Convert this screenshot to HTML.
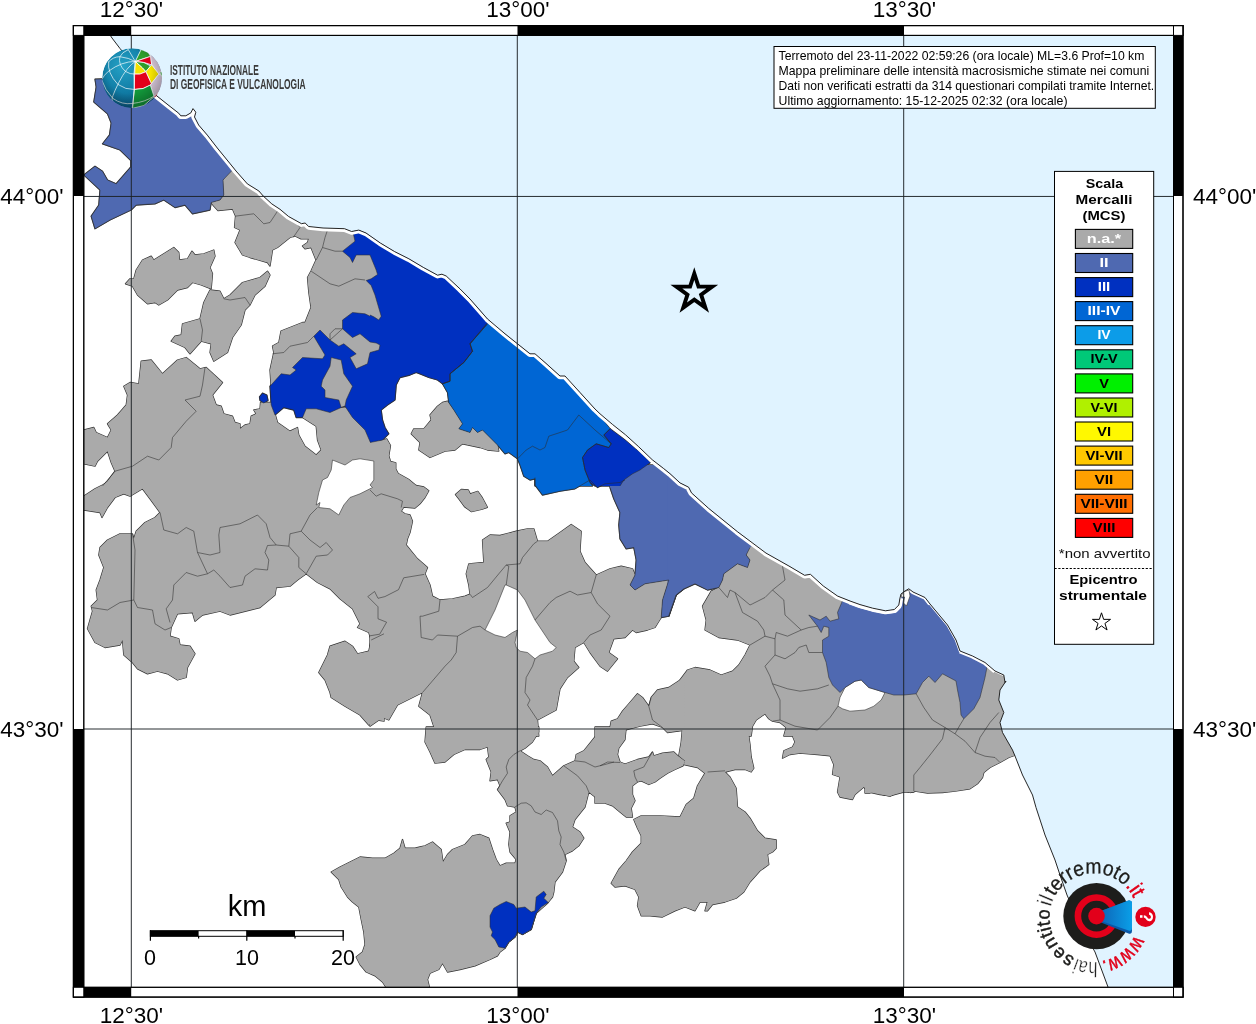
<!DOCTYPE html>
<html><head><meta charset="utf-8"><title>Mappa intensita</title>
<style>
html,body{margin:0;padding:0;background:#fff;}
body{width:1256px;height:1024px;overflow:hidden;font-family:"Liberation Sans",sans-serif;}
svg{display:block;position:absolute;left:0;top:0;will-change:transform;}
text{font-family:"Liberation Sans",sans-serif;}
.g{fill:#aaaaaa;stroke:none}
.c2{fill:#4f69b1;stroke:none}
.c3{fill:#0030c0;stroke:none}
.c34{fill:#0066d4;stroke:none}
.ol{fill:none;stroke:#333;stroke-width:1.3;stroke-linejoin:round}
.b{fill:none;stroke:#2c2c2c;stroke-width:0.55;stroke-linejoin:round}
.ax{font-size:22.5px;fill:#000}
</style></head><body>
<svg width="1256" height="1024" viewBox="0 0 1256 1024">
<defs><clipPath id="mapclip"><rect x="83.8" y="35.4" width="1089.7" height="951.9"/></clipPath></defs>
<rect x="83.8" y="35.4" width="1089.7" height="951.9" fill="#e0f3ff"/>
<g clip-path="url(#mapclip)">
<clipPath id="landclip"><polygon points="84.0,35.0 110.0,35.0 112.0,38.0 120.0,48.5 132.0,63.0 145.0,80.0 155.7,95.0 170.1,106.5 178.7,113.2 180.8,115.8 185.8,115.8 190.8,112.9 193.0,108.6 195.8,112.2 194.5,117.0 198.7,125.1 207.3,135.1 217.3,148.0 230.2,163.8 236.0,171.0 247.4,183.9 258.9,191.0 263.2,196.0 271.8,203.9 280.0,209.3 288.6,216.5 301.5,223.7 305.1,223.0 308.7,226.5 323.0,228.0 344.5,228.7 351.6,231.5 358.8,230.1 366.0,233.0 380.3,243.0 394.6,251.6 408.9,258.8 423.3,267.4 437.6,275.2 441.9,274.2 446.2,276.0 460.0,288.9 470.0,299.0 487.5,319.0 505.0,333.8 517.5,343.8 530.0,353.8 535.0,353.8 545.0,362.5 560.0,376.0 565.0,376.0 580.0,392.5 595.0,409.0 600.0,413.8 612.7,424.6 625.5,434.8 638.2,446.3 652.2,459.7 663.7,468.6 670.0,473.7 680.0,482.9 688.6,487.2 691.5,492.9 708.7,508.4 737.3,531.6 766.0,553.1 788.9,566.0 804.6,575.3 810.4,574.3 823.3,586.0 837.6,596.1 850.0,601.0 860.0,604.6 872.7,608.2 885.5,610.8 894.4,609.5 898.8,605.0 900.0,598.0 901.0,594.0 905.0,591.0 908.8,588.8 913.0,592.0 925.0,597.5 930.0,604.0 935.0,610.0 947.5,625.0 956.0,640.0 960.0,651.0 972.5,656.0 985.0,662.5 995.0,671.0 1003.8,675.0 1005.0,682.5 1006.0,681.0 1000.0,690.0 998.8,700.0 1003.8,712.5 1000.0,722.5 1002.5,732.5 1012.5,750.0 1015.0,756.0 1022.5,775.0 1032.5,795.0 1036.0,807.5 1045.0,835.0 1055.0,860.0 1060.0,875.0 1067.0,895.0 1080.0,925.0 1095.0,952.0 1108.0,987.0 84.0,987.5"/></clipPath>
<polygon points="84.0,35.0 110.0,35.0 112.0,38.0 120.0,48.5 132.0,63.0 145.0,80.0 155.7,95.0 170.1,106.5 178.7,113.2 180.8,115.8 185.8,115.8 190.8,112.9 193.0,108.6 195.8,112.2 194.5,117.0 198.7,125.1 207.3,135.1 217.3,148.0 230.2,163.8 236.0,171.0 247.4,183.9 258.9,191.0 263.2,196.0 271.8,203.9 280.0,209.3 288.6,216.5 301.5,223.7 305.1,223.0 308.7,226.5 323.0,228.0 344.5,228.7 351.6,231.5 358.8,230.1 366.0,233.0 380.3,243.0 394.6,251.6 408.9,258.8 423.3,267.4 437.6,275.2 441.9,274.2 446.2,276.0 460.0,288.9 470.0,299.0 487.5,319.0 505.0,333.8 517.5,343.8 530.0,353.8 535.0,353.8 545.0,362.5 560.0,376.0 565.0,376.0 580.0,392.5 595.0,409.0 600.0,413.8 612.7,424.6 625.5,434.8 638.2,446.3 652.2,459.7 663.7,468.6 670.0,473.7 680.0,482.9 688.6,487.2 691.5,492.9 708.7,508.4 737.3,531.6 766.0,553.1 788.9,566.0 804.6,575.3 810.4,574.3 823.3,586.0 837.6,596.1 850.0,601.0 860.0,604.6 872.7,608.2 885.5,610.8 894.4,609.5 898.8,605.0 900.0,598.0 901.0,594.0 905.0,591.0 908.8,588.8 913.0,592.0 925.0,597.5 930.0,604.0 935.0,610.0 947.5,625.0 956.0,640.0 960.0,651.0 972.5,656.0 985.0,662.5 995.0,671.0 1003.8,675.0 1005.0,682.5 1006.0,681.0 1000.0,690.0 998.8,700.0 1003.8,712.5 1000.0,722.5 1002.5,732.5 1012.5,750.0 1015.0,756.0 1022.5,775.0 1032.5,795.0 1036.0,807.5 1045.0,835.0 1055.0,860.0 1060.0,875.0 1067.0,895.0 1080.0,925.0 1095.0,952.0 1108.0,987.0 84.0,987.5" fill="#fff" stroke="none"/>
<g clip-path="url(#landclip)">
<polygon class="ol" points="232.5,167.0 250.0,178.0 266.0,192.0 280.0,204.0 293.0,212.0 305.0,219.0 322.5,222.0 345.0,225.0 352.0,228.0 384.0,238.0 384.0,385.0 271.0,385.0 270.0,370.0 273.8,352.5 272.5,346.0 278.8,342.5 281.0,331.0 302.5,322.5 305.0,322.5 311.0,307.5 308.8,292.5 307.5,277.5 311.0,271.0 316.0,260.0 311.0,247.5 305.0,248.8 302.5,246.0 307.5,242.5 308.8,238.8 301.0,238.8 295.0,236.0 290.0,237.5 277.5,247.5 272.5,250.0 270.0,266.0 267.5,262.5 250.0,257.5 242.5,255.0 235.0,242.5 240.0,230.0 234.5,227.5 235.5,216.0 232.5,209.0 218.0,210.5 213.8,206.0 211.0,202.5 220.0,200.0 223.8,195.0 223.0,180.0"/>
<polygon class="ol" points="125.5,283.8 130.0,278.8 133.8,278.8 136.2,270.0 142.5,260.0 151.2,256.2 153.8,260.0 163.8,253.8 173.8,247.5 178.8,252.5 179.5,260.0 187.5,258.8 192.0,251.2 195.0,255.0 203.8,253.8 213.8,250.0 215.0,256.2 210.0,267.5 212.5,273.8 211.2,288.8 201.2,285.0 192.5,282.5 187.5,287.5 177.5,290.0 167.5,300.0 158.8,305.0 155.0,302.5 147.5,303.8 137.5,295.0 132.5,286.2"/>
<polygon class="ol" points="210.0,290.0 220.0,291.2 223.8,298.8 230.0,295.0 242.5,282.5 260.0,277.5 267.5,271.2 270.0,275.0 265.0,286.2 255.0,295.0 250.0,305.0 245.0,310.0 241.2,325.0 232.5,337.5 227.5,352.5 213.8,361.2 210.0,352.5 211.2,343.8 201.2,341.2 190.0,353.8 185.0,347.5 171.2,341.2 175.0,336.2 181.2,335.0 182.5,323.8 200.0,318.8 203.8,302.5"/>
<polygon class="ol" points="83.8,430.0 93.8,427.5 96.2,432.5 107.5,437.5 111.2,430.0 107.5,423.8 117.5,415.0 126.2,405.0 127.5,395.0 123.8,386.2 130.0,382.5 138.8,383.8 141.2,361.2 151.2,360.0 162.5,373.8 177.5,360.0 186.2,357.5 200.0,368.8 206.2,367.5 222.5,382.5 212.5,395.0 216.2,405.0 221.2,406.2 223.8,413.8 232.5,416.2 235.0,422.5 240.0,423.8 240.0,428.8 245.0,425.0 250.0,423.8 251.2,416.2 256.2,413.8 253.8,410.0 260.0,408.8 260.5,402.5 272.5,402.5 275.0,413.8 277.5,422.5 290.0,431.2 297.5,427.5 298.8,435.0 305.0,446.2 316.2,455.0 321.2,450.0 317.5,440.0 316.2,426.2 302.5,417.5 305.0,407.5 379.5,407.5 379.5,442.5 384.0,442.5 384.0,486.0 102.5,486.0 107.5,481.2 115.0,471.2 111.2,462.5 107.5,451.2 97.5,461.2 95.0,466.2 83.8,463.8"/>
<polygon class="ol" points="442.5,402.5 447.5,401.2 453.8,410.0 462.5,423.8 458.8,428.8 470.0,432.5 472.5,427.5 477.5,432.5 482.5,430.0 490.0,437.5 497.5,445.0 498.8,451.2 487.5,450.0 480.0,447.5 462.5,443.8 455.0,450.0 445.0,451.2 430.0,457.5 418.8,450.0 420.0,442.5 411.2,433.8 413.8,428.8 423.8,428.8 431.2,420.0 430.0,415.0 437.5,406.2"/>
<polygon class="ol" points="111.2,480.0 384.0,480.0 384.0,721.2 377.5,720.0 368.8,725.0 360.0,715.0 345.0,706.2 331.2,697.5 330.0,692.5 325.0,680.0 318.8,672.5 327.5,655.0 330.0,646.2 345.0,641.2 352.5,646.2 357.5,653.8 368.8,651.2 371.2,640.0 368.8,632.5 357.5,627.5 360.0,623.8 352.5,608.8 340.0,598.8 330.0,588.8 317.5,582.5 306.2,573.8 297.5,580.0 290.0,586.2 276.2,587.5 275.0,595.0 267.5,601.2 260.0,607.5 250.0,610.0 230.0,615.0 220.0,611.2 202.5,615.0 195.0,621.2 192.5,612.5 177.5,613.8 171.2,627.5 170.0,636.2 178.8,638.8 180.0,645.0 190.0,646.2 195.0,653.8 187.5,667.5 186.2,677.5 177.5,680.0 167.5,673.8 157.5,671.2 147.5,673.8 137.5,668.8 132.5,662.5 123.8,655.0 122.5,640.0 120.0,645.0 105.0,647.5 95.0,642.5 87.5,628.8 92.5,611.2 91.2,606.2 97.5,600.0 96.2,590.0 100.0,580.0 103.8,567.5 98.8,555.0 100.0,547.5 107.5,540.0 120.0,533.8 132.5,533.8 133.8,538.8 136.2,531.2 145.0,522.5 155.0,517.5 160.0,512.5 150.0,498.8 142.5,488.8 130.0,496.2 123.8,493.8 115.0,497.5 107.5,507.5 102.0,517.5 100.0,512.5 83.8,510.0 83.8,496.2 95.0,488.8 102.5,485.0"/>
<polygon class="ol" points="370.0,442.5 382.5,440.0 386.8,439.0 390.5,445.5 388.8,455.8 390.5,461.5 395.8,462.8 395.8,469.0 398.2,473.5 408.5,479.2 416.0,485.5 423.8,487.0 428.8,490.8 425.0,497.5 420.0,503.8 415.0,508.0 403.8,507.0 401.2,511.2 405.0,513.8 410.0,515.0 412.5,521.2 410.0,532.5 407.5,538.8 406.2,545.0 411.2,551.2 417.5,558.8 427.5,567.5 425.0,573.8 430.0,585.0 432.5,596.2 440.0,600.0 452.5,598.8 465.0,596.2 470.0,594.2 468.8,585.0 466.2,573.8 468.8,563.8 483.8,562.5 482.5,540.0 490.0,535.0 500.0,535.5 516.2,531.2 527.5,528.8 533.8,528.8 537.5,541.2 547.5,541.2 560.0,532.5 571.2,524.5 581.2,531.2 580.0,551.2 585.0,562.5 596.2,575.0 610.0,568.8 621.2,566.2 632.5,568.8 635.0,575.0 630.0,585.0 635.0,590.0 645.0,583.8 668.8,580.0 662.5,600.0 661.2,617.5 655.0,627.5 647.5,630.0 636.2,632.5 632.5,630.0 625.0,637.5 613.8,638.8 608.8,652.5 617.5,658.8 607.5,671.2 600.0,666.2 590.0,652.5 583.8,642.5 575.0,647.5 573.8,661.2 578.8,667.5 567.5,677.5 560.0,688.8 556.2,710.0 537.5,720.0 538.8,736.0 426.2,736.0 435.0,730.0 430.0,715.0 418.8,706.2 422.5,692.5 407.5,700.0 397.5,705.0 388.8,720.0 382.5,717.5 370.0,726.2"/>
<polygon class="ol" points="455.5,494.5 461.3,489.4 468.3,490.0 470.2,493.9 477.8,491.3 482.3,497.7 487.4,507.3 482.3,509.2 471.5,511.7 464.5,506.6 459.4,499.6"/>
<polygon class="ol" points="750.0,544.5 782.5,563.2 805.0,573.2 830.0,588.2 842.5,599.5 984.0,599.5 984.0,736.0 783.8,736.0 786.2,727.5 780.0,722.5 772.5,721.2 768.8,718.8 765.0,713.8 756.2,720.0 752.5,726.2 751.2,736.0 682.5,736.0 687.5,732.5 685.0,730.0 670.0,731.2 670.0,688.8 676.2,687.5 680.0,680.0 687.5,670.0 695.0,667.5 710.0,670.0 721.2,675.0 732.5,671.2 738.8,665.0 745.0,655.0 750.0,645.0 737.5,640.0 718.8,637.5 705.0,630.0 706.2,620.0 702.5,606.2 711.2,591.2 718.8,587.5 722.5,580.0 723.8,573.8 737.5,563.8 747.5,567.5 750.0,560.0 746.2,555.0"/>
<polygon class="ol" points="426.2,727.0 425.0,742.0 430.0,752.0 435.0,763.2 445.0,762.0 453.8,754.5 465.0,749.5 480.0,749.5 487.5,747.0 488.8,757.0 486.2,759.5 491.2,772.0 490.0,780.8 497.5,779.5 500.0,785.8 497.5,789.5 505.0,799.5 507.5,805.8 515.0,807.0 516.2,812.0 510.0,815.8 510.0,822.0 506.2,823.2 510.0,832.0 508.8,844.5 510.0,852.0 516.2,859.5 515.0,863.2 506.2,863.2 500.0,865.8 496.2,859.5 492.5,849.5 488.8,838.2 480.0,834.5 472.5,835.8 465.0,844.5 452.5,849.5 447.5,854.5 443.0,862.0 441.2,849.5 432.5,842.0 425.0,845.8 420.0,847.0 415.0,848.2 405.0,848.2 402.5,839.5 400.0,848.2 393.8,853.2 385.0,858.2 372.5,858.2 360.0,857.0 350.0,862.0 340.0,867.0 331.2,872.0 338.8,879.5 341.2,887.0 347.5,897.0 352.5,902.0 358.8,907.0 361.2,919.5 363.8,932.0 365.0,944.5 362.5,952.0 356.2,957.0 360.0,964.5 366.2,972.0 375.0,975.8 382.5,982.0 387.5,989.5 430.0,989.5 427.5,979.5 430.0,973.2 438.8,969.5 442.5,963.2 447.5,972.0 460.0,969.5 475.0,965.8 490.0,959.5 497.5,955.8 500.0,952.0 505.0,948.2 508.8,942.0 515.0,937.0 517.5,932.0 522.5,934.5 531.2,929.5 533.8,920.8 536.2,913.2 547.5,903.2 552.5,897.0 553.8,892.0 555.0,882.0 562.5,872.0 566.2,860.8 565.0,854.5 572.5,850.8 578.8,845.8 583.8,838.2 580.0,832.0 572.5,827.0 575.0,819.5 585.0,807.0 588.8,792.0 600.0,800.8 614.0,804.5 614.0,727.0 603.8,732.0 595.0,737.0 590.0,743.2 583.8,750.8 576.2,754.5 575.0,760.8 563.8,765.8 552.5,775.8 547.5,767.0 540.0,760.8 533.8,759.5 527.5,755.8 520.0,750.8 525.0,748.2 532.5,742.0 538.8,732.0 538.8,727.0"/>
<polygon class="ol" points="682.5,727.0 681.2,742.0 678.8,755.8 685.0,760.8 683.8,764.5 697.5,767.5 705.0,773.2 697.5,785.8 693.8,798.2 686.2,804.5 680.0,817.0 660.0,815.8 641.2,815.8 633.8,819.5 637.5,828.2 641.2,835.8 641.2,843.2 632.5,852.0 626.2,860.8 618.8,869.5 611.2,883.2 615.0,887.0 625.0,885.8 635.0,889.5 638.8,897.0 637.5,905.8 641.2,915.8 650.0,915.8 662.5,917.0 675.0,910.8 685.0,907.0 695.0,910.8 700.0,902.0 707.5,902.0 705.0,910.8 707.5,910.8 712.5,904.5 725.0,902.0 736.2,898.2 743.8,892.0 750.0,882.0 760.0,870.8 768.8,864.5 767.5,854.5 772.5,852.0 776.2,848.2 776.2,840.0 765.0,838.2 757.5,830.8 750.0,818.2 745.0,812.0 737.5,807.0 736.2,788.2 730.0,777.0 725.0,772.0 735.0,769.5 745.0,769.5 751.2,772.0 753.8,768.2 751.2,757.0 750.0,744.5 747.5,727.0"/>
<polygon class="ol" points="626.2,727.0 625.0,739.5 618.8,748.2 617.5,754.5 620.0,762.0 625.0,764.0 637.5,759.5 648.8,757.0 652.5,752.0 653.8,755.8 662.5,753.2 673.8,752.0 678.0,756.0 685.0,761.2 683.0,765.8 675.0,769.5 667.5,773.2 660.0,778.2 655.0,782.0 648.8,784.5 641.2,780.8 637.5,782.0 632.5,785.8 632.5,794.5 635.0,800.8 631.2,808.2 632.5,817.0 626.2,817.0 620.0,812.0 612.5,805.8 605.0,803.2 595.0,803.2 595.0,727.0"/>
<polygon class="ol" points="788.8,727.0 795.0,742.0 792.5,747.0 783.8,750.8 782.5,758.2 790.0,754.5 800.0,753.2 817.5,754.5 830.0,755.8 833.8,764.5 832.5,774.5 840.0,777.0 837.5,792.0 840.0,797.0 852.5,799.5 855.0,794.5 863.8,787.0 868.8,792.0 880.0,794.5 890.0,795.8 903.8,792.0 914.0,792.0 914.0,727.0"/>
<polygon class="ol" points="870.0,793.0 875.0,791.2 882.5,794.5 890.0,796.2 902.5,790.0 910.0,792.5 915.0,791.2 927.5,793.0 942.5,792.5 955.0,791.2 970.0,788.8 977.5,783.8 982.5,777.5 983.8,772.5 990.0,767.5 1000.0,762.5 1008.8,757.5 1014.5,755.5 1025.0,750.0 1025.0,635.0 865.0,635.0 865.0,793.0"/>
<polygon class="ol" points="610.0,727.5 611.2,721.2 617.5,718.8 622.5,711.2 628.8,703.8 637.5,693.8 642.5,697.5 648.8,706.2 651.2,697.5 657.5,690.0 668.8,687.5 684.0,677.5 685.0,730.0 667.5,732.5 662.5,727.5 652.5,723.8 640.0,726.2 625.0,730.0 620.0,736.0 610.0,736.0"/>
<polygon class="ol" points="95.0,79.2 145.0,77.5 158.8,93.8 180.0,110.0 197.5,115.0 213.8,136.2 233.8,163.8 232.5,170.0 223.0,180.0 223.8,195.0 220.0,200.0 211.2,202.5 210.0,210.0 192.5,213.8 185.0,205.0 175.0,207.5 163.8,200.0 155.0,203.8 136.2,205.0 131.2,210.0 110.0,220.0 95.0,228.8 91.2,216.2 98.8,205.0 100.0,190.0 83.8,175.0 95.0,166.2 102.5,171.2 107.5,180.0 116.2,183.8 130.8,167.0 130.8,160.5 120.0,150.0 102.5,143.8 109.5,135.0 111.2,123.0 107.5,113.8 93.8,102.0 96.2,87.0"/>
<polygon class="ol" points="610.0,487.5 610.0,465.0 684.0,465.0 684.0,588.8 676.2,595.0 668.8,616.2 661.2,617.5 662.5,600.0 668.8,580.0 645.0,583.8 635.0,590.0 630.0,585.0 635.0,575.0 636.2,560.0 633.8,547.5 626.2,548.8 620.0,538.8 618.8,525.0 620.0,512.5 613.8,498.8"/>
<polygon class="ol" points="667.5,465.0 720.0,505.0 752.5,545.5 750.0,547.5 746.2,555.0 750.0,560.0 747.5,567.5 737.5,563.8 723.8,573.8 722.5,580.0 718.8,587.5 707.5,590.0 695.0,583.8 684.0,588.8 676.2,595.0 668.8,616.2 667.5,616.2"/>
<polygon class="ol" points="843.2,599.0 837.5,612.5 838.8,618.8 830.0,621.2 826.2,616.2 820.0,620.0 808.8,615.0 817.5,626.2 821.2,632.5 823.8,626.2 828.8,627.5 828.8,636.2 822.5,640.0 822.5,652.5 826.2,662.5 828.8,677.5 832.5,685.0 840.0,692.5 845.0,687.5 855.0,681.2 861.2,680.0 868.8,687.5 885.0,692.5 893.8,695.0 903.8,695.0 916.2,693.8 922.5,682.5 928.8,676.2 935.0,682.5 942.5,673.8 956.0,681.0 957.5,690.0 960.0,702.5 961.0,715.0 963.8,718.8 973.8,708.8 980.0,697.5 985.0,677.5 987.5,664.5 1020.0,663.8 1020.0,580.0 845.0,580.0"/>
<polygon class="ol" points="487.5,322.5 505.0,333.8 517.5,343.8 530.0,353.8 545.0,362.5 560.0,376.2 580.0,392.5 595.0,410.0 610.0,428.8 603.8,435.0 611.2,443.8 608.8,447.5 596.2,443.8 587.5,450.0 582.5,457.5 585.0,470.0 590.0,482.5 592.5,486.0 535.0,486.0 535.0,478.8 530.0,480.0 523.8,476.2 520.0,465.0 517.5,458.8 508.8,452.5 505.0,453.8 497.5,445.0 490.0,437.5 482.5,430.0 477.5,432.5 472.5,427.5 470.0,432.5 458.8,428.8 462.5,423.8 453.8,410.0 448.8,402.5 447.5,392.5 442.5,383.8 450.0,381.2 450.0,373.8 463.8,362.5 472.5,351.2 470.0,343.8"/>
<polygon class="ol" points="535.0,477.5 535.0,485.0 542.5,495.0 560.0,491.2 575.0,488.8 590.0,480.0 592.5,477.5"/>
<polygon class="ol" points="352.5,230.0 370.2,230.0 370.2,255.0 356.2,255.0 352.5,262.5 350.0,257.5 342.5,251.2 355.0,241.2"/>
<polygon class="ol" points="370.2,315.0 370.2,442.0 365.0,430.0 352.5,417.5 345.0,406.2 341.2,407.5 330.0,412.5 316.2,408.8 306.2,408.8 302.5,417.5 296.2,417.5 293.8,410.0 283.8,407.5 275.0,415.0 271.2,405.0 270.0,386.2 281.2,373.8 290.0,375.0 296.2,370.0 292.5,367.5 302.5,357.5 322.5,358.8 325.0,355.0 313.8,336.2 320.0,330.0 330.0,340.0 342.5,328.8 342.5,320.0 352.5,312.5 365.0,313.8 370.0,316.2"/>
<polygon class="ol" points="259.5,397.0 262.5,393.2 266.8,395.0 268.0,400.5 263.8,403.0 260.0,400.5"/>
<polygon class="ol" points="370.0,233.8 355.0,220.0 420.0,255.0 490.0,318.8 487.5,323.8 470.0,343.8 472.5,351.2 463.8,362.5 450.0,373.8 450.0,381.2 442.5,383.8 437.5,380.0 428.8,377.5 420.0,373.8 416.2,372.5 410.0,375.0 400.0,377.5 396.2,385.0 395.0,400.0 387.5,405.0 381.2,410.0 382.5,420.0 385.0,427.5 388.8,433.8 382.5,440.0 370.0,442.5 370.0,343.8 370.0,315.0 373.8,316.8 378.8,320.0 381.2,316.2 375.0,295.0 371.2,285.5 366.2,280.5 371.2,278.8 377.5,274.5 376.2,270.0 370.0,255.0"/>
<polygon class="ol" points="611.2,443.8 608.8,447.5 596.2,443.8 587.5,450.0 582.5,457.5 585.0,470.0 590.0,482.5 595.0,486.0 620.0,486.0 623.8,480.0 632.5,473.8 640.0,470.0 650.5,462.5 640.0,452.5 625.0,440.0 610.0,428.8 603.8,435.0"/>
<polygon class="ol" points="590.0,477.5 590.0,480.0 597.5,487.5 605.0,483.8 620.0,482.5 625.0,480.0 620.0,477.5"/>
<polygon class="ol" points="490.0,915.8 493.8,908.2 500.0,904.5 506.2,901.5 513.8,904.5 516.2,908.2 525.0,907.0 531.2,912.0 535.0,910.8 536.2,897.0 543.8,891.2 546.2,894.5 543.8,898.2 548.2,902.5 541.2,907.0 536.2,913.2 533.8,920.8 531.2,929.5 522.5,934.5 517.5,932.0 515.0,937.0 508.8,942.0 505.0,948.2 498.8,947.0 495.0,939.5 491.2,935.8 492.5,932.0 490.0,927.0"/>
<polygon class="g" points="232.5,167.0 250.0,178.0 266.0,192.0 280.0,204.0 293.0,212.0 305.0,219.0 322.5,222.0 345.0,225.0 352.0,228.0 384.0,238.0 384.0,385.0 271.0,385.0 270.0,370.0 273.8,352.5 272.5,346.0 278.8,342.5 281.0,331.0 302.5,322.5 305.0,322.5 311.0,307.5 308.8,292.5 307.5,277.5 311.0,271.0 316.0,260.0 311.0,247.5 305.0,248.8 302.5,246.0 307.5,242.5 308.8,238.8 301.0,238.8 295.0,236.0 290.0,237.5 277.5,247.5 272.5,250.0 270.0,266.0 267.5,262.5 250.0,257.5 242.5,255.0 235.0,242.5 240.0,230.0 234.5,227.5 235.5,216.0 232.5,209.0 218.0,210.5 213.8,206.0 211.0,202.5 220.0,200.0 223.8,195.0 223.0,180.0"/>
<polygon class="g" points="125.5,283.8 130.0,278.8 133.8,278.8 136.2,270.0 142.5,260.0 151.2,256.2 153.8,260.0 163.8,253.8 173.8,247.5 178.8,252.5 179.5,260.0 187.5,258.8 192.0,251.2 195.0,255.0 203.8,253.8 213.8,250.0 215.0,256.2 210.0,267.5 212.5,273.8 211.2,288.8 201.2,285.0 192.5,282.5 187.5,287.5 177.5,290.0 167.5,300.0 158.8,305.0 155.0,302.5 147.5,303.8 137.5,295.0 132.5,286.2"/>
<polygon class="g" points="210.0,290.0 220.0,291.2 223.8,298.8 230.0,295.0 242.5,282.5 260.0,277.5 267.5,271.2 270.0,275.0 265.0,286.2 255.0,295.0 250.0,305.0 245.0,310.0 241.2,325.0 232.5,337.5 227.5,352.5 213.8,361.2 210.0,352.5 211.2,343.8 201.2,341.2 190.0,353.8 185.0,347.5 171.2,341.2 175.0,336.2 181.2,335.0 182.5,323.8 200.0,318.8 203.8,302.5"/>
<polygon class="g" points="83.8,430.0 93.8,427.5 96.2,432.5 107.5,437.5 111.2,430.0 107.5,423.8 117.5,415.0 126.2,405.0 127.5,395.0 123.8,386.2 130.0,382.5 138.8,383.8 141.2,361.2 151.2,360.0 162.5,373.8 177.5,360.0 186.2,357.5 200.0,368.8 206.2,367.5 222.5,382.5 212.5,395.0 216.2,405.0 221.2,406.2 223.8,413.8 232.5,416.2 235.0,422.5 240.0,423.8 240.0,428.8 245.0,425.0 250.0,423.8 251.2,416.2 256.2,413.8 253.8,410.0 260.0,408.8 260.5,402.5 272.5,402.5 275.0,413.8 277.5,422.5 290.0,431.2 297.5,427.5 298.8,435.0 305.0,446.2 316.2,455.0 321.2,450.0 317.5,440.0 316.2,426.2 302.5,417.5 305.0,407.5 379.5,407.5 379.5,442.5 384.0,442.5 384.0,486.0 102.5,486.0 107.5,481.2 115.0,471.2 111.2,462.5 107.5,451.2 97.5,461.2 95.0,466.2 83.8,463.8"/>
<polygon class="g" points="442.5,402.5 447.5,401.2 453.8,410.0 462.5,423.8 458.8,428.8 470.0,432.5 472.5,427.5 477.5,432.5 482.5,430.0 490.0,437.5 497.5,445.0 498.8,451.2 487.5,450.0 480.0,447.5 462.5,443.8 455.0,450.0 445.0,451.2 430.0,457.5 418.8,450.0 420.0,442.5 411.2,433.8 413.8,428.8 423.8,428.8 431.2,420.0 430.0,415.0 437.5,406.2"/>
<polygon class="g" points="111.2,480.0 384.0,480.0 384.0,721.2 377.5,720.0 368.8,725.0 360.0,715.0 345.0,706.2 331.2,697.5 330.0,692.5 325.0,680.0 318.8,672.5 327.5,655.0 330.0,646.2 345.0,641.2 352.5,646.2 357.5,653.8 368.8,651.2 371.2,640.0 368.8,632.5 357.5,627.5 360.0,623.8 352.5,608.8 340.0,598.8 330.0,588.8 317.5,582.5 306.2,573.8 297.5,580.0 290.0,586.2 276.2,587.5 275.0,595.0 267.5,601.2 260.0,607.5 250.0,610.0 230.0,615.0 220.0,611.2 202.5,615.0 195.0,621.2 192.5,612.5 177.5,613.8 171.2,627.5 170.0,636.2 178.8,638.8 180.0,645.0 190.0,646.2 195.0,653.8 187.5,667.5 186.2,677.5 177.5,680.0 167.5,673.8 157.5,671.2 147.5,673.8 137.5,668.8 132.5,662.5 123.8,655.0 122.5,640.0 120.0,645.0 105.0,647.5 95.0,642.5 87.5,628.8 92.5,611.2 91.2,606.2 97.5,600.0 96.2,590.0 100.0,580.0 103.8,567.5 98.8,555.0 100.0,547.5 107.5,540.0 120.0,533.8 132.5,533.8 133.8,538.8 136.2,531.2 145.0,522.5 155.0,517.5 160.0,512.5 150.0,498.8 142.5,488.8 130.0,496.2 123.8,493.8 115.0,497.5 107.5,507.5 102.0,517.5 100.0,512.5 83.8,510.0 83.8,496.2 95.0,488.8 102.5,485.0"/>
<polygon class="g" points="370.0,442.5 382.5,440.0 386.8,439.0 390.5,445.5 388.8,455.8 390.5,461.5 395.8,462.8 395.8,469.0 398.2,473.5 408.5,479.2 416.0,485.5 423.8,487.0 428.8,490.8 425.0,497.5 420.0,503.8 415.0,508.0 403.8,507.0 401.2,511.2 405.0,513.8 410.0,515.0 412.5,521.2 410.0,532.5 407.5,538.8 406.2,545.0 411.2,551.2 417.5,558.8 427.5,567.5 425.0,573.8 430.0,585.0 432.5,596.2 440.0,600.0 452.5,598.8 465.0,596.2 470.0,594.2 468.8,585.0 466.2,573.8 468.8,563.8 483.8,562.5 482.5,540.0 490.0,535.0 500.0,535.5 516.2,531.2 527.5,528.8 533.8,528.8 537.5,541.2 547.5,541.2 560.0,532.5 571.2,524.5 581.2,531.2 580.0,551.2 585.0,562.5 596.2,575.0 610.0,568.8 621.2,566.2 632.5,568.8 635.0,575.0 630.0,585.0 635.0,590.0 645.0,583.8 668.8,580.0 662.5,600.0 661.2,617.5 655.0,627.5 647.5,630.0 636.2,632.5 632.5,630.0 625.0,637.5 613.8,638.8 608.8,652.5 617.5,658.8 607.5,671.2 600.0,666.2 590.0,652.5 583.8,642.5 575.0,647.5 573.8,661.2 578.8,667.5 567.5,677.5 560.0,688.8 556.2,710.0 537.5,720.0 538.8,736.0 426.2,736.0 435.0,730.0 430.0,715.0 418.8,706.2 422.5,692.5 407.5,700.0 397.5,705.0 388.8,720.0 382.5,717.5 370.0,726.2"/>
<polygon class="g" points="455.5,494.5 461.3,489.4 468.3,490.0 470.2,493.9 477.8,491.3 482.3,497.7 487.4,507.3 482.3,509.2 471.5,511.7 464.5,506.6 459.4,499.6"/>
<polygon class="g" points="750.0,544.5 782.5,563.2 805.0,573.2 830.0,588.2 842.5,599.5 984.0,599.5 984.0,736.0 783.8,736.0 786.2,727.5 780.0,722.5 772.5,721.2 768.8,718.8 765.0,713.8 756.2,720.0 752.5,726.2 751.2,736.0 682.5,736.0 687.5,732.5 685.0,730.0 670.0,731.2 670.0,688.8 676.2,687.5 680.0,680.0 687.5,670.0 695.0,667.5 710.0,670.0 721.2,675.0 732.5,671.2 738.8,665.0 745.0,655.0 750.0,645.0 737.5,640.0 718.8,637.5 705.0,630.0 706.2,620.0 702.5,606.2 711.2,591.2 718.8,587.5 722.5,580.0 723.8,573.8 737.5,563.8 747.5,567.5 750.0,560.0 746.2,555.0"/>
<polygon class="g" points="426.2,727.0 425.0,742.0 430.0,752.0 435.0,763.2 445.0,762.0 453.8,754.5 465.0,749.5 480.0,749.5 487.5,747.0 488.8,757.0 486.2,759.5 491.2,772.0 490.0,780.8 497.5,779.5 500.0,785.8 497.5,789.5 505.0,799.5 507.5,805.8 515.0,807.0 516.2,812.0 510.0,815.8 510.0,822.0 506.2,823.2 510.0,832.0 508.8,844.5 510.0,852.0 516.2,859.5 515.0,863.2 506.2,863.2 500.0,865.8 496.2,859.5 492.5,849.5 488.8,838.2 480.0,834.5 472.5,835.8 465.0,844.5 452.5,849.5 447.5,854.5 443.0,862.0 441.2,849.5 432.5,842.0 425.0,845.8 420.0,847.0 415.0,848.2 405.0,848.2 402.5,839.5 400.0,848.2 393.8,853.2 385.0,858.2 372.5,858.2 360.0,857.0 350.0,862.0 340.0,867.0 331.2,872.0 338.8,879.5 341.2,887.0 347.5,897.0 352.5,902.0 358.8,907.0 361.2,919.5 363.8,932.0 365.0,944.5 362.5,952.0 356.2,957.0 360.0,964.5 366.2,972.0 375.0,975.8 382.5,982.0 387.5,989.5 430.0,989.5 427.5,979.5 430.0,973.2 438.8,969.5 442.5,963.2 447.5,972.0 460.0,969.5 475.0,965.8 490.0,959.5 497.5,955.8 500.0,952.0 505.0,948.2 508.8,942.0 515.0,937.0 517.5,932.0 522.5,934.5 531.2,929.5 533.8,920.8 536.2,913.2 547.5,903.2 552.5,897.0 553.8,892.0 555.0,882.0 562.5,872.0 566.2,860.8 565.0,854.5 572.5,850.8 578.8,845.8 583.8,838.2 580.0,832.0 572.5,827.0 575.0,819.5 585.0,807.0 588.8,792.0 600.0,800.8 614.0,804.5 614.0,727.0 603.8,732.0 595.0,737.0 590.0,743.2 583.8,750.8 576.2,754.5 575.0,760.8 563.8,765.8 552.5,775.8 547.5,767.0 540.0,760.8 533.8,759.5 527.5,755.8 520.0,750.8 525.0,748.2 532.5,742.0 538.8,732.0 538.8,727.0"/>
<polygon class="g" points="682.5,727.0 681.2,742.0 678.8,755.8 685.0,760.8 683.8,764.5 697.5,767.5 705.0,773.2 697.5,785.8 693.8,798.2 686.2,804.5 680.0,817.0 660.0,815.8 641.2,815.8 633.8,819.5 637.5,828.2 641.2,835.8 641.2,843.2 632.5,852.0 626.2,860.8 618.8,869.5 611.2,883.2 615.0,887.0 625.0,885.8 635.0,889.5 638.8,897.0 637.5,905.8 641.2,915.8 650.0,915.8 662.5,917.0 675.0,910.8 685.0,907.0 695.0,910.8 700.0,902.0 707.5,902.0 705.0,910.8 707.5,910.8 712.5,904.5 725.0,902.0 736.2,898.2 743.8,892.0 750.0,882.0 760.0,870.8 768.8,864.5 767.5,854.5 772.5,852.0 776.2,848.2 776.2,840.0 765.0,838.2 757.5,830.8 750.0,818.2 745.0,812.0 737.5,807.0 736.2,788.2 730.0,777.0 725.0,772.0 735.0,769.5 745.0,769.5 751.2,772.0 753.8,768.2 751.2,757.0 750.0,744.5 747.5,727.0"/>
<polygon class="g" points="626.2,727.0 625.0,739.5 618.8,748.2 617.5,754.5 620.0,762.0 625.0,764.0 637.5,759.5 648.8,757.0 652.5,752.0 653.8,755.8 662.5,753.2 673.8,752.0 678.0,756.0 685.0,761.2 683.0,765.8 675.0,769.5 667.5,773.2 660.0,778.2 655.0,782.0 648.8,784.5 641.2,780.8 637.5,782.0 632.5,785.8 632.5,794.5 635.0,800.8 631.2,808.2 632.5,817.0 626.2,817.0 620.0,812.0 612.5,805.8 605.0,803.2 595.0,803.2 595.0,727.0"/>
<polygon class="g" points="788.8,727.0 795.0,742.0 792.5,747.0 783.8,750.8 782.5,758.2 790.0,754.5 800.0,753.2 817.5,754.5 830.0,755.8 833.8,764.5 832.5,774.5 840.0,777.0 837.5,792.0 840.0,797.0 852.5,799.5 855.0,794.5 863.8,787.0 868.8,792.0 880.0,794.5 890.0,795.8 903.8,792.0 914.0,792.0 914.0,727.0"/>
<polygon class="g" points="870.0,793.0 875.0,791.2 882.5,794.5 890.0,796.2 902.5,790.0 910.0,792.5 915.0,791.2 927.5,793.0 942.5,792.5 955.0,791.2 970.0,788.8 977.5,783.8 982.5,777.5 983.8,772.5 990.0,767.5 1000.0,762.5 1008.8,757.5 1014.5,755.5 1025.0,750.0 1025.0,635.0 865.0,635.0 865.0,793.0"/>
<polygon class="g" points="610.0,727.5 611.2,721.2 617.5,718.8 622.5,711.2 628.8,703.8 637.5,693.8 642.5,697.5 648.8,706.2 651.2,697.5 657.5,690.0 668.8,687.5 684.0,677.5 685.0,730.0 667.5,732.5 662.5,727.5 652.5,723.8 640.0,726.2 625.0,730.0 620.0,736.0 610.0,736.0"/>
<polygon points="261.5,395.8 265.0,396.5 264.8,399.0 261.8,398.0" fill="#fff" stroke="#333" stroke-width="0.6"/>
<polygon points="322.5,480.0 318.8,492.5 316.2,505.0 320.0,502.5 318.8,507.5 330.0,508.8 338.8,515.0 343.8,505.0 350.0,497.5 360.0,493.8 372.5,487.5 370.0,485.0 373.8,480.0 373.8,461.0 360.0,458.8 352.5,460.0 345.0,465.0 332.5,460.0 331.2,470.0 327.5,477.5" fill="#fff" stroke="#333" stroke-width="0.6"/>
<polygon points="506.2,585.0 517.5,590.0 525.0,600.0 535.0,620.0 545.0,635.0 550.0,642.5 556.2,647.5 552.5,651.2 540.0,655.0 535.0,658.8 527.5,652.5 520.0,651.2 516.2,647.5 515.0,642.5 517.5,630.0 512.5,632.5 505.0,637.5 495.0,635.0 485.0,630.0 495.0,610.0 505.0,585.0" fill="#fff" stroke="#333" stroke-width="0.6"/>
<polygon points="840.0,697.5 845.0,687.5 855.0,681.2 861.2,680.0 868.8,687.5 885.0,692.5 881.2,700.0 873.8,706.2 865.0,710.0 850.0,711.2 842.5,708.8 838.0,706.2" fill="#fff" stroke="#333" stroke-width="0.6"/>
<polygon class="c2" points="95.0,79.2 145.0,77.5 158.8,93.8 180.0,110.0 197.5,115.0 213.8,136.2 233.8,163.8 232.5,170.0 223.0,180.0 223.8,195.0 220.0,200.0 211.2,202.5 210.0,210.0 192.5,213.8 185.0,205.0 175.0,207.5 163.8,200.0 155.0,203.8 136.2,205.0 131.2,210.0 110.0,220.0 95.0,228.8 91.2,216.2 98.8,205.0 100.0,190.0 83.8,175.0 95.0,166.2 102.5,171.2 107.5,180.0 116.2,183.8 130.8,167.0 130.8,160.5 120.0,150.0 102.5,143.8 109.5,135.0 111.2,123.0 107.5,113.8 93.8,102.0 96.2,87.0"/>
<polygon class="c2" points="610.0,487.5 610.0,465.0 684.0,465.0 684.0,588.8 676.2,595.0 668.8,616.2 661.2,617.5 662.5,600.0 668.8,580.0 645.0,583.8 635.0,590.0 630.0,585.0 635.0,575.0 636.2,560.0 633.8,547.5 626.2,548.8 620.0,538.8 618.8,525.0 620.0,512.5 613.8,498.8"/>
<polygon class="c2" points="667.5,465.0 720.0,505.0 752.5,545.5 750.0,547.5 746.2,555.0 750.0,560.0 747.5,567.5 737.5,563.8 723.8,573.8 722.5,580.0 718.8,587.5 707.5,590.0 695.0,583.8 684.0,588.8 676.2,595.0 668.8,616.2 667.5,616.2"/>
<polygon class="c2" points="843.2,599.0 837.5,612.5 838.8,618.8 830.0,621.2 826.2,616.2 820.0,620.0 808.8,615.0 817.5,626.2 821.2,632.5 823.8,626.2 828.8,627.5 828.8,636.2 822.5,640.0 822.5,652.5 826.2,662.5 828.8,677.5 832.5,685.0 840.0,692.5 845.0,687.5 855.0,681.2 861.2,680.0 868.8,687.5 885.0,692.5 893.8,695.0 903.8,695.0 916.2,693.8 922.5,682.5 928.8,676.2 935.0,682.5 942.5,673.8 956.0,681.0 957.5,690.0 960.0,702.5 961.0,715.0 963.8,718.8 973.8,708.8 980.0,697.5 985.0,677.5 987.5,664.5 1020.0,663.8 1020.0,580.0 845.0,580.0"/>
<polygon class="c34" points="487.5,322.5 505.0,333.8 517.5,343.8 530.0,353.8 545.0,362.5 560.0,376.2 580.0,392.5 595.0,410.0 610.0,428.8 603.8,435.0 611.2,443.8 608.8,447.5 596.2,443.8 587.5,450.0 582.5,457.5 585.0,470.0 590.0,482.5 592.5,486.0 535.0,486.0 535.0,478.8 530.0,480.0 523.8,476.2 520.0,465.0 517.5,458.8 508.8,452.5 505.0,453.8 497.5,445.0 490.0,437.5 482.5,430.0 477.5,432.5 472.5,427.5 470.0,432.5 458.8,428.8 462.5,423.8 453.8,410.0 448.8,402.5 447.5,392.5 442.5,383.8 450.0,381.2 450.0,373.8 463.8,362.5 472.5,351.2 470.0,343.8"/>
<polygon class="c34" points="535.0,477.5 535.0,485.0 542.5,495.0 560.0,491.2 575.0,488.8 590.0,480.0 592.5,477.5"/>
<polygon class="c3" points="352.5,230.0 370.2,230.0 370.2,255.0 356.2,255.0 352.5,262.5 350.0,257.5 342.5,251.2 355.0,241.2"/>
<polygon class="c3" points="370.2,315.0 370.2,442.0 365.0,430.0 352.5,417.5 345.0,406.2 341.2,407.5 330.0,412.5 316.2,408.8 306.2,408.8 302.5,417.5 296.2,417.5 293.8,410.0 283.8,407.5 275.0,415.0 271.2,405.0 270.0,386.2 281.2,373.8 290.0,375.0 296.2,370.0 292.5,367.5 302.5,357.5 322.5,358.8 325.0,355.0 313.8,336.2 320.0,330.0 330.0,340.0 342.5,328.8 342.5,320.0 352.5,312.5 365.0,313.8 370.0,316.2"/>
<polygon class="c3" points="259.5,397.0 262.5,393.2 266.8,395.0 268.0,400.5 263.8,403.0 260.0,400.5"/>
<polygon class="c3" points="370.0,233.8 355.0,220.0 420.0,255.0 490.0,318.8 487.5,323.8 470.0,343.8 472.5,351.2 463.8,362.5 450.0,373.8 450.0,381.2 442.5,383.8 437.5,380.0 428.8,377.5 420.0,373.8 416.2,372.5 410.0,375.0 400.0,377.5 396.2,385.0 395.0,400.0 387.5,405.0 381.2,410.0 382.5,420.0 385.0,427.5 388.8,433.8 382.5,440.0 370.0,442.5 370.0,343.8 370.0,315.0 373.8,316.8 378.8,320.0 381.2,316.2 375.0,295.0 371.2,285.5 366.2,280.5 371.2,278.8 377.5,274.5 376.2,270.0 370.0,255.0"/>
<polygon class="c3" points="611.2,443.8 608.8,447.5 596.2,443.8 587.5,450.0 582.5,457.5 585.0,470.0 590.0,482.5 595.0,486.0 620.0,486.0 623.8,480.0 632.5,473.8 640.0,470.0 650.5,462.5 640.0,452.5 625.0,440.0 610.0,428.8 603.8,435.0"/>
<polygon class="c3" points="590.0,477.5 590.0,480.0 597.5,487.5 605.0,483.8 620.0,482.5 625.0,480.0 620.0,477.5"/>
<polygon class="c3" points="490.0,915.8 493.8,908.2 500.0,904.5 506.2,901.5 513.8,904.5 516.2,908.2 525.0,907.0 531.2,912.0 535.0,910.8 536.2,897.0 543.8,891.2 546.2,894.5 543.8,898.2 548.2,902.5 541.2,907.0 536.2,913.2 533.8,920.8 531.2,929.5 522.5,934.5 517.5,932.0 515.0,937.0 508.8,942.0 505.0,948.2 498.8,947.0 495.0,939.5 491.2,935.8 492.5,932.0 490.0,927.0"/>
<polygon class="g" points="330.0,333.8 335.0,328.8 342.5,328.8 352.5,337.5 360.0,333.8 370.0,342.0 376.2,343.0 380.0,345.0 379.0,350.0 370.0,352.5 367.5,363.8 356.2,368.8 350.0,357.5 356.2,353.8 343.8,343.8 338.8,346.2 330.0,340.0"/>
<polygon class="g" points="331.2,357.5 341.2,360.0 343.8,373.8 352.5,386.2 346.2,400.0 345.0,406.2 341.2,407.5 338.8,400.0 325.0,397.5 325.0,390.0 321.2,386.2 322.5,380.0 330.0,366.2"/>
<polyline class="b" points="95.0,79.2 145.0,77.5"/>
<polyline class="b" points="232.5,170.0 223.0,180.0 223.8,195.0 220.0,200.0 211.2,202.5 210.0,210.0 192.5,213.8 185.0,205.0 175.0,207.5 163.8,200.0 155.0,203.8 136.2,205.0 131.2,210.0 110.0,220.0 95.0,228.8 91.2,216.2 98.8,205.0 100.0,190.0 83.8,175.0 95.0,166.2 102.5,171.2 107.5,180.0 116.2,183.8 130.8,167.0 130.8,160.5 120.0,150.0 102.5,143.8 109.5,135.0 111.2,123.0 107.5,113.8 93.8,102.0 96.2,87.0 95.0,79.2"/>
<polyline class="b" points="684.0,588.8 676.2,595.0 668.8,616.2 661.2,617.5 662.5,600.0 668.8,580.0 645.0,583.8 635.0,590.0 630.0,585.0 635.0,575.0 636.2,560.0 633.8,547.5 626.2,548.8 620.0,538.8 618.8,525.0 620.0,512.5 613.8,498.8 610.0,487.5"/>
<polyline class="b" points="750.0,547.5 746.2,555.0 750.0,560.0 747.5,567.5 737.5,563.8 723.8,573.8 722.5,580.0 718.8,587.5 707.5,590.0 695.0,583.8 684.0,588.8 676.2,595.0 668.8,616.2"/>
<polyline class="b" points="843.2,599.0 837.5,612.5 838.8,618.8 830.0,621.2 826.2,616.2 820.0,620.0 808.8,615.0 817.5,626.2 821.2,632.5 823.8,626.2 828.8,627.5 828.8,636.2 822.5,640.0 822.5,652.5 826.2,662.5 828.8,677.5 832.5,685.0 840.0,692.5 845.0,687.5 855.0,681.2 861.2,680.0 868.8,687.5 885.0,692.5 893.8,695.0 903.8,695.0 916.2,693.8 922.5,682.5 928.8,676.2 935.0,682.5 942.5,673.8 956.0,681.0 957.5,690.0 960.0,702.5 961.0,715.0 963.8,718.8 973.8,708.8 980.0,697.5 985.0,677.5 987.5,664.5"/>
<polyline class="b" points="610.0,428.8 603.8,435.0 611.2,443.8 608.8,447.5 596.2,443.8 587.5,450.0 582.5,457.5 585.0,470.0 590.0,482.5 592.5,486.0"/>
<polyline class="b" points="535.0,486.0 535.0,478.8 530.0,480.0 523.8,476.2 520.0,465.0 517.5,458.8 508.8,452.5 505.0,453.8 497.5,445.0 490.0,437.5 482.5,430.0 477.5,432.5 472.5,427.5 470.0,432.5 458.8,428.8 462.5,423.8 453.8,410.0 448.8,402.5 447.5,392.5 442.5,383.8 450.0,381.2 450.0,373.8 463.8,362.5 472.5,351.2 470.0,343.8 487.5,322.5"/>
<polyline class="b" points="535.0,477.5 535.0,485.0 542.5,495.0 560.0,491.2 575.0,488.8 590.0,480.0"/>
<polyline class="b" points="370.2,255.0 356.2,255.0 352.5,262.5 350.0,257.5 342.5,251.2 355.0,241.2 352.5,230.0"/>
<polyline class="b" points="370.2,442.0 365.0,430.0 352.5,417.5 345.0,406.2 341.2,407.5 330.0,412.5 316.2,408.8 306.2,408.8 302.5,417.5 296.2,417.5 293.8,410.0 283.8,407.5 275.0,415.0 271.2,405.0 270.0,386.2 281.2,373.8 290.0,375.0 296.2,370.0 292.5,367.5 302.5,357.5 322.5,358.8 325.0,355.0 313.8,336.2 320.0,330.0 330.0,340.0 342.5,328.8 342.5,320.0 352.5,312.5 365.0,313.8 370.0,316.2"/>
<polyline class="b" points="259.5,397.0 262.5,393.2 266.8,395.0 268.0,400.5 263.8,403.0 260.0,400.5 259.5,397.0"/>
<polyline class="b" points="487.5,323.8 470.0,343.8 472.5,351.2 463.8,362.5 450.0,373.8 450.0,381.2 442.5,383.8 437.5,380.0 428.8,377.5 420.0,373.8 416.2,372.5 410.0,375.0 400.0,377.5 396.2,385.0 395.0,400.0 387.5,405.0 381.2,410.0 382.5,420.0 385.0,427.5 388.8,433.8 382.5,440.0 370.0,442.5"/>
<polyline class="b" points="370.0,315.0 373.8,316.8 378.8,320.0 381.2,316.2 375.0,295.0 371.2,285.5 366.2,280.5 371.2,278.8 377.5,274.5 376.2,270.0 370.0,255.0"/>
<polyline class="b" points="611.2,443.8 608.8,447.5 596.2,443.8 587.5,450.0 582.5,457.5 585.0,470.0 590.0,482.5 595.0,486.0"/>
<polyline class="b" points="620.0,486.0 623.8,480.0 632.5,473.8 640.0,470.0 650.5,462.5"/>
<polyline class="b" points="610.0,428.8 603.8,435.0 611.2,443.8"/>
<polyline class="b" points="590.0,480.0 597.5,487.5 605.0,483.8 620.0,482.5 625.0,480.0"/>
<polyline class="b" points="490.0,915.8 493.8,908.2 500.0,904.5 506.2,901.5 513.8,904.5 516.2,908.2 525.0,907.0 531.2,912.0 535.0,910.8 536.2,897.0 543.8,891.2 546.2,894.5 543.8,898.2 548.2,902.5 541.2,907.0 536.2,913.2 533.8,920.8 531.2,929.5 522.5,934.5 517.5,932.0 515.0,937.0 508.8,942.0 505.0,948.2 498.8,947.0 495.0,939.5 491.2,935.8 492.5,932.0 490.0,927.0 490.0,915.8"/>
<polyline class="b" points="330.0,333.8 335.0,328.8 342.5,328.8 352.5,337.5 360.0,333.8 370.0,342.0 376.2,343.0 380.0,345.0 379.0,350.0 370.0,352.5 367.5,363.8 356.2,368.8 350.0,357.5 356.2,353.8 343.8,343.8 338.8,346.2 330.0,340.0 330.0,333.8"/>
<polyline class="b" points="331.2,357.5 341.2,360.0 343.8,373.8 352.5,386.2 346.2,400.0 345.0,406.2 341.2,407.5 338.8,400.0 325.0,397.5 325.0,390.0 321.2,386.2 322.5,380.0 330.0,366.2 331.2,357.5"/>
<polyline class="b" points="223.8,298.8 230.0,300.0 245.0,297.5 250.0,305.0"/>
<polyline class="b" points="200.0,318.8 202.5,330.0 201.2,341.2"/>
<polyline class="b" points="185.0,400.0 196.2,411.2 186.2,421.2 172.5,437.5 171.2,447.5 158.8,460.0 147.5,456.2 132.5,466.2 115.0,471.2 102.5,486.0"/>
<polyline class="b" points="205.0,367.5 202.5,385.0 200.0,396.2 185.0,400.0"/>
<polyline class="b" points="272.5,353.8 283.8,352.5 290.0,346.2 307.5,342.5 313.8,336.2"/>
<polyline class="b" points="311.2,271.2 330.0,283.8 338.8,286.2 355.0,278.8 365.0,280.0"/>
<polyline class="b" points="327.5,230.0 325.0,237.5 322.5,247.5 335.0,251.2 342.5,251.2"/>
<polyline class="b" points="322.5,247.5 316.2,260.0"/>
<polyline class="b" points="517.5,458.8 526.2,450.0 532.5,446.2 540.0,450.0 545.0,447.5 548.8,436.2 560.0,432.5 567.5,430.0 578.8,415.0 595.0,430.0 611.2,443.8"/>
<polyline class="b" points="487.5,323.8 470.0,343.8 472.5,351.2 463.8,362.5 450.0,373.8 450.0,381.2 442.5,383.8"/>
<polyline class="b" points="160.0,512.5 163.8,530.0 177.5,533.8 186.2,527.5 193.8,531.2 197.5,552.5 210.0,555.0 220.0,552.5 218.8,535.0 220.0,527.5 240.0,523.8 257.5,515.0 266.2,523.8 270.0,537.5 276.2,545.0 288.8,546.2 290.0,533.8 301.2,531.2 310.0,515.0 317.5,507.5"/>
<polyline class="b" points="197.5,552.5 207.5,573.8 197.5,576.2 186.2,572.5 173.8,585.0 172.5,600.0 166.2,608.8 170.0,622.5"/>
<polyline class="b" points="207.5,573.8 213.8,570.0 220.0,576.2 230.0,587.5 242.5,585.0 245.0,576.2 255.0,568.8 267.5,570.0 268.8,560.0 265.0,552.5 267.5,545.5 276.2,545.0"/>
<polyline class="b" points="288.8,546.2 298.8,557.5 298.8,567.5 306.2,573.8 316.2,556.2 327.5,555.0 332.5,550.0 326.2,542.5 320.0,547.5 310.0,540.0 301.2,531.2"/>
<polyline class="b" points="132.5,533.8 135.0,550.0 133.8,600.0 137.5,607.5 152.5,610.0 155.0,623.8 165.0,630.0 171.2,627.5"/>
<polyline class="b" points="91.2,607.5 107.5,610.0 120.0,602.5 133.8,600.0"/>
<polyline class="b" points="371.2,640.0 384.0,633.8"/>
<polyline class="b" points="370.0,490.0 376.2,496.2 381.2,493.8 397.5,498.8 402.5,501.2 401.2,507.5"/>
<polyline class="b" points="440.0,600.0 438.8,611.2 422.5,616.2 420.0,616.2 421.2,637.5 432.5,640.0 437.5,635.0 457.5,636.2 472.5,627.5 480.0,626.2 485.0,630.0"/>
<polyline class="b" points="457.5,636.2 456.2,652.5 451.2,660.0 445.0,666.2 437.5,675.0 422.5,692.5"/>
<polyline class="b" points="470.0,594.2 472.5,597.5 487.5,587.5 498.8,573.8 506.2,565.0 508.8,566.2 506.2,585.0"/>
<polyline class="b" points="506.2,565.0 520.0,563.8 522.5,557.5 533.8,543.8 537.5,541.2"/>
<polyline class="b" points="535.0,620.0 550.0,602.5 556.2,597.5 570.0,591.2 577.5,595.0 591.2,592.5 596.2,575.0"/>
<polyline class="b" points="591.2,592.5 597.5,603.8 610.0,616.2 601.2,630.0 590.0,635.0 583.8,642.5"/>
<polyline class="b" points="535.0,658.8 532.5,666.2 526.2,677.5 525.0,692.5 530.0,700.0 527.5,705.0 537.5,720.0"/>
<polyline class="b" points="718.8,587.5 727.5,597.5 730.0,590.0 735.0,592.5 750.0,605.0 752.5,603.8 765.0,597.5 772.5,590.0 785.0,580.0 782.5,566.2"/>
<polyline class="b" points="772.5,590.0 783.8,600.0 785.0,615.0 801.2,630.0 808.8,627.5 817.5,626.2"/>
<polyline class="b" points="735.0,592.5 742.5,612.5 757.5,621.2 763.8,630.0 765.0,636.2 750.0,645.0"/>
<polyline class="b" points="765.0,636.2 775.0,638.8 776.2,632.5 787.5,636.2 801.2,630.0"/>
<polyline class="b" points="775.0,638.8 775.0,655.0 765.0,666.2 770.0,676.2 772.5,683.8 780.0,700.0 780.0,720.0 772.5,721.2"/>
<polyline class="b" points="775.0,655.0 785.0,658.8 795.0,652.5 798.8,647.5 806.2,645.0 808.8,652.5 822.5,652.5"/>
<polyline class="b" points="772.5,683.8 787.5,688.8 800.0,691.2 817.5,688.8 828.8,685.0"/>
<polyline class="b" points="780.0,720.0 795.0,726.2 817.5,730.0 830.0,717.5 838.0,706.2"/>
<polyline class="b" points="520.0,750.8 513.8,754.5 508.8,759.5 506.2,767.0 507.5,773.2 502.5,780.8 497.5,789.5"/>
<polyline class="b" points="515.0,807.0 521.2,803.2 526.2,802.8 531.2,805.8 535.0,812.0 541.2,814.5 546.2,810.0 552.5,812.5 557.5,820.8 558.8,830.8 561.2,837.0 560.0,844.5 563.8,852.0 566.2,860.8"/>
<polyline class="b" points="563.8,765.8 577.5,775.8 586.2,785.8 588.8,792.0"/>
<polyline class="b" points="575.0,760.8 585.0,762.0 595.0,767.0 605.0,764.5 614.0,762.0"/>
<polyline class="b" points="600.0,765.8 607.5,762.0 620.0,762.5"/>
<polyline class="b" points="637.5,782.0 635.0,777.0 633.8,770.8 643.8,767.0 648.8,758.2 652.5,752.0"/>
<polyline class="b" points="707.5,772.0 725.0,770.8"/>
<polyline class="b" points="916.2,693.8 923.8,707.5 932.5,720.0 945.0,727.5 955.0,733.8 960.0,725.0 963.8,718.8"/>
<polyline class="b" points="945.0,727.5 942.5,738.8 930.0,755.0 920.0,767.5 913.8,775.0 913.8,791.2"/>
<polyline class="b" points="955.0,733.8 965.0,741.2 975.0,752.5 985.0,756.2 995.0,757.5 1000.0,762.5"/>
<polyline class="b" points="975.0,752.5 980.0,737.5 990.0,722.5 998.8,712.5"/>
<polyline class="b" points="235.0,216.2 253.8,213.8 263.8,223.8 270.0,222.5 277.5,211.2"/>
<polyline class="b" points="295.0,221.2 300.0,227.5 293.2,237.5"/>
<polyline class="b" points="322.5,227.5 327.5,230.0"/>
<polyline class="b" points="651.2,697.5 648.8,706.2 652.5,720.0 662.5,727.5"/>
<polyline class="b" points="424.2,574.4 403.7,577.8 398.5,589.7 384.9,596.6 378.0,598.3 374.6,591.5 367.8,596.6 378.0,606.8 378.0,618.8 386.6,622.2 379.7,634.2 369.5,635.9"/>
<polyline points="145.0,80.0 155.7,95.0 170.1,106.5 178.7,113.2 180.8,115.8 185.8,115.8 190.8,112.9 193.0,108.6 195.8,112.2 194.5,117.0 198.7,125.1 207.3,135.1 217.3,148.0 230.2,163.8 236.0,171.0 247.4,183.9 258.9,191.0 263.2,196.0 271.8,203.9 280.0,209.3 288.6,216.5 301.5,223.7 305.1,223.0 308.7,226.5 323.0,228.0 344.5,228.7 351.6,231.5 358.8,230.1 366.0,233.0 380.3,243.0 394.6,251.6 408.9,258.8 423.3,267.4 437.6,275.2 441.9,274.2 446.2,276.0 460.0,288.9 470.0,299.0 487.5,319.0 505.0,333.8 517.5,343.8 530.0,353.8 535.0,353.8 545.0,362.5 560.0,376.0 565.0,376.0 580.0,392.5 595.0,409.0 600.0,413.8 612.7,424.6 625.5,434.8 638.2,446.3 652.2,459.7 663.7,468.6 670.0,473.7 680.0,482.9 688.6,487.2 691.5,492.9 708.7,508.4 737.3,531.6 766.0,553.1 788.9,566.0 804.6,575.3 810.4,574.3 823.3,586.0 837.6,596.1 850.0,601.0 860.0,604.6 872.7,608.2 885.5,610.8 894.4,609.5 898.8,605.0 900.0,598.0" fill="none" stroke="#fff" stroke-width="6.4" stroke-linejoin="round"/>
<polyline points="900.0,598.0 901.0,594.0 905.0,591.0 908.8,588.8 913.0,592.0 925.0,597.5 930.0,604.0 935.0,610.0 947.5,625.0 956.0,640.0 960.0,651.0 972.5,656.0 985.0,662.5 995.0,671.0 1003.8,675.0" fill="none" stroke="#fff" stroke-width="2.4" stroke-linejoin="round"/>
<polyline points="908.8,588.8 913.0,592.0 925.0,597.5 930.0,604.0" fill="none" stroke="#fff" stroke-width="4.2" stroke-linejoin="round"/>
<polyline points="960.0,651.0 972.5,656.0 985.0,662.5 995.0,671.0" fill="none" stroke="#fff" stroke-width="5.0" stroke-linejoin="round"/>
<polyline points="850.0,601.0 860.0,604.6 872.7,608.2 885.5,610.8 894.4,609.5 898.8,605.0" fill="none" stroke="#fff" stroke-width="7" stroke-linejoin="round"/>
<polygon points="903,592 909,590 910,596 906.5,606 903.5,603 904.5,597 901,597" fill="#fff" stroke="#333" stroke-width="0.6"/>
</g>
<polyline points="110.0,35.0 112.0,38.0 120.0,48.5 132.0,63.0 145.0,80.0 155.7,95.0 170.1,106.5 178.7,113.2 180.8,115.8 185.8,115.8 190.8,112.9 193.0,108.6 195.8,112.2 194.5,117.0 198.7,125.1 207.3,135.1 217.3,148.0 230.2,163.8 236.0,171.0 247.4,183.9 258.9,191.0 263.2,196.0 271.8,203.9 280.0,209.3 288.6,216.5 301.5,223.7 305.1,223.0 308.7,226.5 323.0,228.0 344.5,228.7 351.6,231.5 358.8,230.1 366.0,233.0 380.3,243.0 394.6,251.6 408.9,258.8 423.3,267.4 437.6,275.2 441.9,274.2 446.2,276.0 460.0,288.9 470.0,299.0 487.5,319.0 505.0,333.8 517.5,343.8 530.0,353.8 535.0,353.8 545.0,362.5 560.0,376.0 565.0,376.0 580.0,392.5 595.0,409.0 600.0,413.8 612.7,424.6 625.5,434.8 638.2,446.3 652.2,459.7 663.7,468.6 670.0,473.7 680.0,482.9 688.6,487.2 691.5,492.9 708.7,508.4 737.3,531.6 766.0,553.1 788.9,566.0 804.6,575.3 810.4,574.3 823.3,586.0 837.6,596.1 850.0,601.0 860.0,604.6 872.7,608.2 885.5,610.8 894.4,609.5 898.8,605.0 900.0,598.0 901.0,594.0 905.0,591.0 908.8,588.8 913.0,592.0 925.0,597.5 930.0,604.0 935.0,610.0 947.5,625.0 956.0,640.0 960.0,651.0 972.5,656.0 985.0,662.5 995.0,671.0 1003.8,675.0 1005.0,682.5 1006.0,681.0 1000.0,690.0 998.8,700.0 1003.8,712.5 1000.0,722.5 1002.5,732.5 1012.5,750.0 1015.0,756.0 1022.5,775.0 1032.5,795.0 1036.0,807.5 1045.0,835.0 1055.0,860.0 1060.0,875.0 1067.0,895.0 1080.0,925.0 1095.0,952.0 1108.0,987.0" fill="none" stroke="#1a1a1a" stroke-width="0.95" stroke-linejoin="round"/>
</g>
<g stroke="#1c2226" stroke-width="0.95" fill="none">
<line x1="131.3" y1="35.4" x2="131.3" y2="987.3"/><line x1="517.3" y1="35.4" x2="517.3" y2="987.3"/><line x1="903.7" y1="35.4" x2="903.7" y2="987.3"/>
<line x1="83.8" y1="196.45" x2="1173.5" y2="196.45"/><line x1="83.8" y1="729" x2="1173.5" y2="729"/>
</g>
<polygon points="694.30,273.60 698.52,286.59 712.18,286.59 701.13,294.62 705.35,307.61 694.30,299.58 683.25,307.61 687.47,294.62 676.42,286.59 690.08,286.59" fill="none" stroke="#000" stroke-width="3.9" stroke-linejoin="miter" stroke-miterlimit="10"/>
<g>
<rect x="774" y="46.5" width="381.3" height="61.8" fill="#fff" stroke="#000" stroke-width="1"/>
<g font-size="12.15" fill="#000">
<text x="778.6" y="59.7" textLength="365.8" lengthAdjust="spacingAndGlyphs">Terremoto del 23-11-2022 02:59:26 (ora locale) ML=3.6 Prof=10 km</text>
<text x="778.6" y="74.6" textLength="370.6" lengthAdjust="spacingAndGlyphs">Mappa preliminare delle intensità macrosismiche stimate nei comuni</text>
<text x="778.6" y="89.6" textLength="375.6" lengthAdjust="spacingAndGlyphs">Dati non verificati estratti da 314 questionari compilati tramite Internet.</text>
<text x="778.6" y="104.5" textLength="288.9" lengthAdjust="spacingAndGlyphs">Ultimo aggiornamento: 15-12-2025 02:32 (ora locale)</text>
</g></g>
<g>
<rect x="1054.5" y="171.4" width="99.2" height="472.9" fill="#fff" stroke="#000" stroke-width="1"/>
<text x="1104.5" y="187.8" text-anchor="middle" font-size="12.3" font-weight="bold" fill="#000" textLength="37.3" lengthAdjust="spacingAndGlyphs">Scala</text>
<text x="1104.0" y="204.0" text-anchor="middle" font-size="12.3" font-weight="bold" fill="#000" textLength="56.8" lengthAdjust="spacingAndGlyphs">Mercalli</text>
<text x="1104.0" y="219.8" text-anchor="middle" font-size="12.3" font-weight="bold" fill="#000" textLength="43.0" lengthAdjust="spacingAndGlyphs">(MCS)</text>
<rect x="1075.4" y="229.4" width="57.3" height="19" fill="#aaaaaa" stroke="#000" stroke-width="1.1"/>
<text x="1104.0" y="243.0" text-anchor="middle" font-size="12.0" font-weight="bold" fill="#fff" textLength="34.4" lengthAdjust="spacingAndGlyphs">n.a.*</text>
<rect x="1075.4" y="253.5" width="57.3" height="19" fill="#4f69b1" stroke="#000" stroke-width="1.1"/>
<text x="1104.0" y="267.1" text-anchor="middle" font-size="12.0" font-weight="bold" fill="#fff" textLength="9.1" lengthAdjust="spacingAndGlyphs">II</text>
<rect x="1075.4" y="277.6" width="57.3" height="19" fill="#0030c0" stroke="#000" stroke-width="1.1"/>
<text x="1104.0" y="291.2" text-anchor="middle" font-size="12.0" font-weight="bold" fill="#fff" textLength="12.6" lengthAdjust="spacingAndGlyphs">III</text>
<rect x="1075.4" y="301.6" width="57.3" height="19" fill="#0066d4" stroke="#000" stroke-width="1.1"/>
<text x="1104.0" y="315.2" text-anchor="middle" font-size="12.0" font-weight="bold" fill="#fff" textLength="33.0" lengthAdjust="spacingAndGlyphs">III-IV</text>
<rect x="1075.4" y="325.7" width="57.3" height="19" fill="#0c9ce8" stroke="#000" stroke-width="1.1"/>
<text x="1104.0" y="339.3" text-anchor="middle" font-size="12.0" font-weight="bold" fill="#fff" textLength="13.2" lengthAdjust="spacingAndGlyphs">IV</text>
<rect x="1075.4" y="349.8" width="57.3" height="19" fill="#00c878" stroke="#000" stroke-width="1.1"/>
<text x="1104.0" y="363.4" text-anchor="middle" font-size="12.0" font-weight="bold" fill="#000" textLength="27.2" lengthAdjust="spacingAndGlyphs">IV-V</text>
<rect x="1075.4" y="373.9" width="57.3" height="19" fill="#00f000" stroke="#000" stroke-width="1.1"/>
<text x="1104.0" y="387.5" text-anchor="middle" font-size="12.0" font-weight="bold" fill="#000" textLength="9.7" lengthAdjust="spacingAndGlyphs">V</text>
<rect x="1075.4" y="398.0" width="57.3" height="19" fill="#b0f000" stroke="#000" stroke-width="1.1"/>
<text x="1104.0" y="411.6" text-anchor="middle" font-size="12.0" font-weight="bold" fill="#000" textLength="26.9" lengthAdjust="spacingAndGlyphs">V-VI</text>
<rect x="1075.4" y="422.0" width="57.3" height="19" fill="#fff800" stroke="#000" stroke-width="1.1"/>
<text x="1104.0" y="435.6" text-anchor="middle" font-size="12.0" font-weight="bold" fill="#000" textLength="14.0" lengthAdjust="spacingAndGlyphs">VI</text>
<rect x="1075.4" y="446.1" width="57.3" height="19" fill="#ffc800" stroke="#000" stroke-width="1.1"/>
<text x="1104.0" y="459.7" text-anchor="middle" font-size="12.0" font-weight="bold" fill="#000" textLength="37.2" lengthAdjust="spacingAndGlyphs">VI-VII</text>
<rect x="1075.4" y="470.2" width="57.3" height="19" fill="#ffa000" stroke="#000" stroke-width="1.1"/>
<text x="1104.0" y="483.8" text-anchor="middle" font-size="12.0" font-weight="bold" fill="#000" textLength="18.8" lengthAdjust="spacingAndGlyphs">VII</text>
<rect x="1075.4" y="494.3" width="57.3" height="19" fill="#ff6e00" stroke="#000" stroke-width="1.1"/>
<text x="1104.0" y="507.9" text-anchor="middle" font-size="12.0" font-weight="bold" fill="#000" textLength="47.1" lengthAdjust="spacingAndGlyphs">VII-VIII</text>
<rect x="1075.4" y="518.4" width="57.3" height="19" fill="#ff0000" stroke="#000" stroke-width="1.1"/>
<text x="1104.0" y="532.0" text-anchor="middle" font-size="12.0" font-weight="bold" fill="#000" textLength="22.8" lengthAdjust="spacingAndGlyphs">VIII</text>
<text x="1104.7" y="557.7" text-anchor="middle" font-size="12.6"  fill="#111" textLength="91.7" lengthAdjust="spacingAndGlyphs">*non avvertito</text>
<line x1="1054.5" y1="568.5" x2="1153" y2="568.5" stroke="#000" stroke-width="1" stroke-dasharray="2.2,1.6"/>
<text x="1103.5" y="583.7" text-anchor="middle" font-size="12.3" font-weight="bold" fill="#000" textLength="68.2" lengthAdjust="spacingAndGlyphs">Epicentro</text>
<text x="1103.0" y="599.9" text-anchor="middle" font-size="12.3" font-weight="bold" fill="#000" textLength="88.0" lengthAdjust="spacingAndGlyphs">strumentale</text>
<polygon points="1101.50,612.80 1103.63,619.36 1110.54,619.36 1104.95,623.42 1107.08,629.99 1101.50,625.93 1095.92,629.99 1098.05,623.42 1092.46,619.36 1099.37,619.36" fill="none" stroke="#000" stroke-width="1" stroke-linejoin="miter"/>
</g>
<g>
<text x="247" y="916.2" text-anchor="middle" font-size="29">km</text>
<rect x="150.4" y="930.7" width="192.8" height="5.6" fill="#fff" stroke="#000" stroke-width="1"/>
<rect x="150.4" y="930.7" width="48.2" height="5.6" fill="#000"/><rect x="246.8" y="930.7" width="48.2" height="5.6" fill="#000"/>
<g stroke="#000" stroke-width="1.2"><line x1="150.4" y1="930.2" x2="150.4" y2="940.7"/><line x1="246.8" y1="930.2" x2="246.8" y2="940.7"/><line x1="343.2" y1="930.2" x2="343.2" y2="940.7"/>
<line x1="198.6" y1="936" x2="198.6" y2="938.6"/><line x1="295" y1="936" x2="295" y2="938.6"/></g>
<g font-size="21.5" text-anchor="middle"><text x="150" y="964.5">0</text><text x="247" y="964.5">10</text><text x="343" y="964.5">20</text></g>
</g>
<g>
<g fill="#fff" stroke="#000" stroke-width="1">
<rect x="73.4" y="25.6" width="1109.6" height="9.799999999999997"/><rect x="73.4" y="987.3" width="1109.6" height="9.800000000000068"/>
<rect x="73.4" y="25.6" width="10.399999999999991" height="971.5"/><rect x="1173.5" y="25.6" width="9.5" height="971.5"/>
</g>
<g fill="#000">
<rect x="83.8" y="25.6" width="47.39999999999999" height="9.799999999999997"/><rect x="517.5" y="25.6" width="386.5" height="9.799999999999997"/>
<rect x="83.8" y="987.3" width="47.39999999999999" height="9.800000000000068"/><rect x="517.5" y="987.3" width="386.5" height="9.800000000000068"/>
<rect x="73.4" y="35.4" width="10.399999999999991" height="160.6"/><rect x="73.4" y="729.0" width="10.399999999999991" height="258.29999999999995"/>
<rect x="1173.5" y="35.4" width="9.5" height="160.6"/><rect x="1173.5" y="729.0" width="9.5" height="258.29999999999995"/>
</g>
<g fill="#fff" stroke="#000" stroke-width="1">
<rect x="73.4" y="25.6" width="10.399999999999991" height="9.799999999999997"/><rect x="1173.5" y="25.6" width="9.5" height="9.799999999999997"/><rect x="73.4" y="987.3" width="10.399999999999991" height="9.800000000000068"/><rect x="1173.5" y="987.3" width="9.5" height="9.800000000000068"/>
</g>
<rect x="73.4" y="25.6" width="1109.6" height="971.5" fill="none" stroke="#000" stroke-width="1.2"/>
<rect x="83.8" y="35.4" width="1089.7" height="951.9" fill="none" stroke="#000" stroke-width="1"/>
</g>
<g class="ax">
<text x="131.5" y="16.5" text-anchor="middle">12°30'</text><text x="518" y="16.5" text-anchor="middle">13°00'</text><text x="904.5" y="16.5" text-anchor="middle">13°30'</text>
<text x="131.5" y="1022.6" text-anchor="middle">12°30'</text><text x="518" y="1022.6" text-anchor="middle">13°00'</text><text x="904.5" y="1022.6" text-anchor="middle">13°30'</text>
<text x="63.5" y="204.2" text-anchor="end">44°00'</text><text x="63.5" y="737.4" text-anchor="end">43°30'</text>
<text x="1193" y="204.2">44°00'</text><text x="1193" y="737.4">43°30'</text>
</g>
<g>
<defs>
<radialGradient id="gTeal" cx="0.35" cy="0.3" r="0.8"><stop offset="0" stop-color="#25a2c6"/><stop offset="0.55" stop-color="#107ba4"/><stop offset="1" stop-color="#08527c"/></radialGradient>
<radialGradient id="gShade" cx="0.45" cy="0.4" r="0.6"><stop offset="0.6" stop-color="#000" stop-opacity="0"/><stop offset="1" stop-color="#000" stop-opacity="0.28"/></radialGradient>
<clipPath id="globeclip"><circle cx="528" cy="528" r="438"/></clipPath>
</defs>
<g transform="translate(96,42) scale(0.06835)">
<g clip-path="url(#globeclip)">
<circle cx="528" cy="528" r="438" fill="url(#gTeal)"/>
<g stroke="#fff" stroke-width="12" stroke-linejoin="round">
<polygon points="660,110 575,285 800,210 760,150" fill="#2e9e2b"/>
<polygon points="575,285 800,210 815,335 700,300" fill="#e2001a"/>
<polygon points="800,210 780,140 1000,300 1000,560 960,560 920,470 815,335" fill="#d9c9dc"/>
<polygon points="575,285 700,300 800,350 730,435 680,380" fill="#2e9e2b"/>
<polygon points="575,285 680,380 730,435 640,470 565,470" fill="#f4e300"/>
<polygon points="800,350 815,335 920,470 810,610 730,435" fill="#f4e300"/>
<polygon points="565,470 640,470 730,435 810,610 795,630 690,680 560,695" fill="#e2001a"/>
<polygon points="920,470 1000,500 1000,800 900,750 850,800 795,630 810,610" fill="#d9c9dc"/>
<polygon points="560,695 690,680 795,630 850,800 700,930 535,970" fill="#12963a"/>
<polygon points="850,800 900,750 960,800 900,900" fill="#e2001a"/>
<polygon points="930,440 1000,440 1000,520 960,500" fill="#2e9e2b"/>
</g>
<g stroke="#fff" stroke-width="10" fill="none" stroke-linecap="round">
<path d="M575,285 L 555,470 L 560,695 L 530,970"/>
<path d="M575,285 L465,100"/>
<path d="M575,285 Q 480,230 350,215 Q 250,215 185,290"/>
<path d="M575,285 Q 380,280 180,430 Q 120,480 85,545"/>
<path d="M575,285 Q 450,360 330,600 T 235,860"/>
<path d="M465,115 Q 380,150 350,215 Q 320,330 430,430 Q 500,475 565,470"/>
<path d="M185,290 Q 160,450 320,620 Q 430,700 560,695"/>
<path d="M85,560 Q 130,700 245,825 Q 380,920 530,900 Q 720,880 850,790"/>
</g>
<circle cx="528" cy="528" r="438" fill="url(#gShade)"/>
</g>
</g>
<g fill="#3a3a3a" font-weight="bold" font-size="14.4">
<text x="170" y="74.9" textLength="88.7" lengthAdjust="spacingAndGlyphs">ISTITUTO NAZIONALE</text>
<text x="170" y="89.4" textLength="135.6" lengthAdjust="spacingAndGlyphs">DI GEOFISICA E VULCANOLOGIA</text>
</g>
</g>
<g>
<defs><linearGradient id="gCone" x1="0" y1="0" x2="1" y2="0"><stop offset="0" stop-color="#0d66b8"/><stop offset="1" stop-color="#0a9fe8"/></linearGradient></defs>
<circle cx="1096.5" cy="916.1" r="33.2" fill="#1d1d1b"/>
<circle cx="1096.5" cy="916.1" r="18.6" fill="none" stroke="#e2001a" stroke-width="6.6"/>
<path d="M1101,911 L1128.5,900.6 Q1132,899.8 1132,903 L1132,930.5 Q1132,934.6 1128.5,933.6 L1101,922.5 Z" fill="#0a58a8"/>
<path d="M1101,911 L1128.5,900.6 Q1132,899.8 1132,903 L1132,927.5 Q1132,931.6 1128.5,930.6 L1101,921 Z" fill="url(#gCone)"/>
<circle cx="1096.5" cy="916.1" r="8.3" fill="#e2001a"/>
<circle cx="1145.5" cy="916.9" r="10.2" fill="#e2001a"/>
<text transform="translate(1139.6,916.9) rotate(90)" text-anchor="middle" font-size="17.5" font-weight="bold" fill="#fff">?</text>
<text transform="translate(1131.50,940.96) rotate(121.7) scale(0.854,1)" text-anchor="middle" font-size="21" stroke="#e2001a" stroke-width="0.45" fill="#e2001a">w</text>
<text transform="translate(1123.20,950.84) rotate(138.4) scale(0.854,1)" text-anchor="middle" font-size="21" stroke="#e2001a" stroke-width="0.45" fill="#e2001a">w</text>
<text transform="translate(1112.40,957.91) rotate(155.2) scale(0.854,1)" text-anchor="middle" font-size="21" stroke="#e2001a" stroke-width="0.45" fill="#e2001a">w</text>
<text transform="translate(1103.93,960.83) rotate(166.8) scale(0.854,1)" text-anchor="middle" font-size="21" stroke="#e2001a" stroke-width="0.45" fill="#e2001a">.</text>
<text transform="translate(1093.03,961.99) rotate(181.0) scale(0.767,1)" text-anchor="middle" font-size="21" stroke="#fff" stroke-width="0.35" fill="#222">h</text>
<text transform="translate(1084.15,960.94) rotate(192.6) scale(0.767,1)" text-anchor="middle" font-size="21" stroke="#fff" stroke-width="0.35" fill="#222">a</text>
<text transform="translate(1078.15,959.14) rotate(200.7) scale(0.767,1)" text-anchor="middle" font-size="21" stroke="#fff" stroke-width="0.35" fill="#222">i</text>
<text transform="translate(1070.87,955.60) rotate(211.2) scale(0.954,1)" text-anchor="middle" font-size="19" stroke="#1d1d1b" stroke-width="0.45" fill="#1d1d1b">s</text>
<text transform="translate(1062.56,949.11) rotate(224.8) scale(0.954,1)" text-anchor="middle" font-size="19" stroke="#1d1d1b" stroke-width="0.45" fill="#1d1d1b">e</text>
<text transform="translate(1055.73,940.35) rotate(239.2) scale(0.954,1)" text-anchor="middle" font-size="19" stroke="#1d1d1b" stroke-width="0.45" fill="#1d1d1b">n</text>
<text transform="translate(1052.16,932.82) rotate(250.1) scale(0.954,1)" text-anchor="middle" font-size="19" stroke="#1d1d1b" stroke-width="0.45" fill="#1d1d1b">t</text>
<text transform="translate(1050.72,928.02) rotate(256.5) scale(0.954,1)" text-anchor="middle" font-size="19" stroke="#1d1d1b" stroke-width="0.45" fill="#1d1d1b">i</text>
<text transform="translate(1049.83,923.10) rotate(263.0) scale(0.954,1)" text-anchor="middle" font-size="19" stroke="#1d1d1b" stroke-width="0.45" fill="#1d1d1b">t</text>
<text transform="translate(1049.60,914.76) rotate(273.8) scale(0.954,1)" text-anchor="middle" font-size="19" stroke="#1d1d1b" stroke-width="0.45" fill="#1d1d1b">o</text>
<text transform="translate(1051.35,905.03) rotate(286.6) scale(1.037,1)" text-anchor="middle" font-size="21" stroke="#fff" stroke-width="0.35" fill="#222">i</text>
<text transform="translate(1052.98,900.48) rotate(292.9) scale(1.037,1)" text-anchor="middle" font-size="21" stroke="#fff" stroke-width="0.35" fill="#222">l</text>
<text transform="translate(1056.01,894.58) rotate(301.5) scale(0.916,1)" text-anchor="middle" font-size="21" stroke="#1d1d1b" stroke-width="0.3" fill="#1d1d1b">t</text>
<text transform="translate(1060.79,888.16) rotate(311.8) scale(0.916,1)" text-anchor="middle" font-size="21" stroke="#1d1d1b" stroke-width="0.3" fill="#1d1d1b">e</text>
<text transform="translate(1067.06,882.38) rotate(322.9) scale(0.916,1)" text-anchor="middle" font-size="21" stroke="#1d1d1b" stroke-width="0.3" fill="#1d1d1b">r</text>
<text transform="translate(1072.43,878.90) rotate(331.2) scale(0.916,1)" text-anchor="middle" font-size="21" stroke="#1d1d1b" stroke-width="0.3" fill="#1d1d1b">r</text>
<text transform="translate(1080.27,875.52) rotate(342.2) scale(0.916,1)" text-anchor="middle" font-size="21" stroke="#1d1d1b" stroke-width="0.3" fill="#1d1d1b">e</text>
<text transform="translate(1093.40,873.40) rotate(359.5) scale(0.916,1)" text-anchor="middle" font-size="21" stroke="#1d1d1b" stroke-width="0.3" fill="#1d1d1b">m</text>
<text transform="translate(1106.57,875.28) rotate(376.7) scale(0.916,1)" text-anchor="middle" font-size="21" stroke="#1d1d1b" stroke-width="0.3" fill="#1d1d1b">o</text>
<text transform="translate(1113.99,878.27) rotate(387.1) scale(0.916,1)" text-anchor="middle" font-size="21" stroke="#1d1d1b" stroke-width="0.3" fill="#1d1d1b">t</text>
<text transform="translate(1120.76,882.55) rotate(397.5) scale(0.916,1)" text-anchor="middle" font-size="21" stroke="#1d1d1b" stroke-width="0.3" fill="#1d1d1b">o</text>
<text transform="translate(1126.92,888.28) rotate(408.4) scale(0.899,1)" text-anchor="middle" font-size="21" stroke="#e2001a" stroke-width="0.45" fill="#e2001a">.</text>
<text transform="translate(1129.87,891.97) rotate(414.5) scale(0.899,1)" text-anchor="middle" font-size="21" stroke="#e2001a" stroke-width="0.45" fill="#e2001a">i</text>
<text transform="translate(1132.40,895.96) rotate(420.6) scale(0.899,1)" text-anchor="middle" font-size="21" stroke="#e2001a" stroke-width="0.45" fill="#e2001a">t</text>
</g>
</svg></body></html>
